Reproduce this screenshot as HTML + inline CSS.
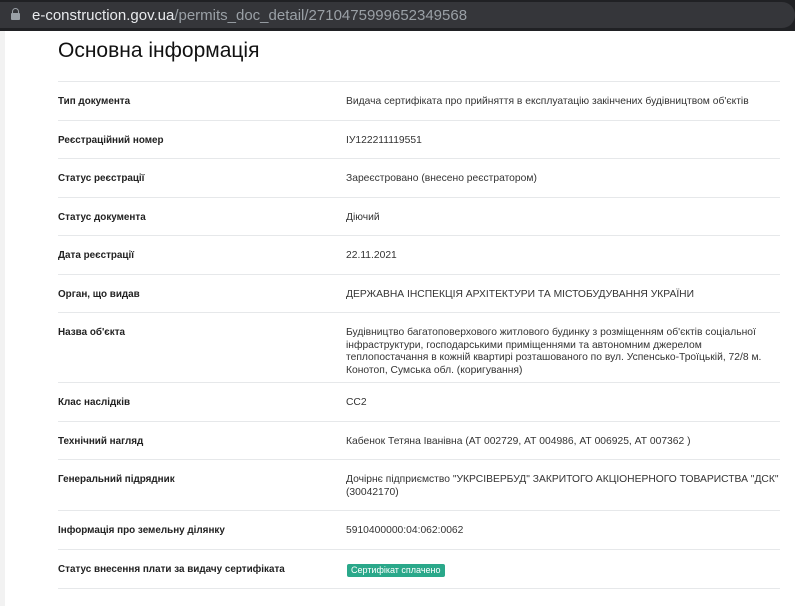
<!DOCTYPE html>
<html><head><meta charset="utf-8"><style>
*{margin:0;padding:0;box-sizing:border-box}
body{width:795px;height:606px;overflow:hidden;background:#fff;font-family:"Liberation Sans",sans-serif;position:relative}
.bar{position:absolute;left:0;top:0;width:795px;height:31px;background:#202124}
.url{position:absolute;left:0;top:2px;width:795px;height:26px;background:#35363a;border-radius:0 13px 13px 0}
.url span{position:absolute;left:32px;top:5px;font-size:15px;color:#9aa0a6;white-space:nowrap}
.url b{font-weight:normal;color:#e8eaed}
.lock{position:absolute;left:11px;top:11px;width:9px;height:7px;background:#9aa0a6;border-radius:1px}
.lock:before{content:"";position:absolute;left:1px;top:-5px;width:7px;height:7px;border:1.5px solid #9aa0a6;border-bottom:none;border-radius:4px 4px 0 0;box-sizing:border-box}
.strip{position:absolute;left:0;top:31px;width:5px;height:575px;background:#f2f2f2}
h1{position:absolute;left:58px;top:39px;font-size:21px;font-weight:normal;color:#111}
.tbl{position:absolute;left:58px;top:81px;width:722px;border-top:1px solid #e6e8ea}
.r{display:flex;border-bottom:1px solid #e6e8ea;padding:14px 0 11px;line-height:12.5px}
.l{width:288px;font-weight:bold;color:#222;flex:none;font-size:9.9px}
.v{color:#333;width:434px;font-size:10.3px}
.badge{display:inline-block;background:#2aa88a;color:#fff;border-radius:2px;padding:0 4px;font-size:9px;line-height:13px;margin-left:1px}
</style></head><body>
<div class="bar"><div class="url"><div class="lock"></div><span><b>e-construction.gov.ua</b>/permits_doc_detail/2710475999652349568</span></div></div>
<div class="strip"></div>
<h1>Основна інформація</h1>
<div class="tbl">
<div class="r"><div class="l">Тип документа</div><div class="v">Видача сертифіката про прийняття в експлуатацію закінчених будівництвом об'єктів</div></div>
<div class="r"><div class="l">Реєстраційний номер</div><div class="v">ІУ122211119551</div></div>
<div class="r"><div class="l">Статус реєстрації</div><div class="v">Зареєстровано (внесено реєстратором)</div></div>
<div class="r"><div class="l">Статус документа</div><div class="v">Діючий</div></div>
<div class="r"><div class="l">Дата реєстрації</div><div class="v">22.11.2021</div></div>
<div class="r"><div class="l">Орган, що видав</div><div class="v">ДЕРЖАВНА ІНСПЕКЦІЯ АРХІТЕКТУРИ ТА МІСТОБУДУВАННЯ УКРАЇНИ</div></div>
<div class="r" style="height:70px"><div class="l">Назва об'єкта</div><div class="v">Будівництво багатоповерхового житлового будинку з розміщенням об'єктів соціальної інфраструктури, господарськими приміщеннями та автономним джерелом<br>теплопостачання в кожній квартирі розташованого по вул. Успенсько-Троїцькій, 72/8 м. Конотоп, Сумська обл. (коригування)</div></div>
<div class="r"><div class="l">Клас наслідків</div><div class="v">СС2</div></div>
<div class="r"><div class="l">Технічний нагляд</div><div class="v">Кабенок Тетяна Іванівна (АТ 002729, АТ 004986, АТ 006925, АТ 007362 )</div></div>
<div class="r" style="height:51px"><div class="l">Генеральний підрядник</div><div class="v">Дочірнє підприємство "УКРСІВЕРБУД" ЗАКРИТОГО АКЦІОНЕРНОГО ТОВАРИСТВА "ДСК" (30042170)</div></div>
<div class="r"><div class="l">Інформація про земельну ділянку</div><div class="v">5910400000:04:062:0062</div></div>
<div class="r"><div class="l">Статус внесення плати за видачу сертифіката</div><div class="v"><span class="badge">Сертифікат сплачено</span></div></div>
</div>
</body></html>
